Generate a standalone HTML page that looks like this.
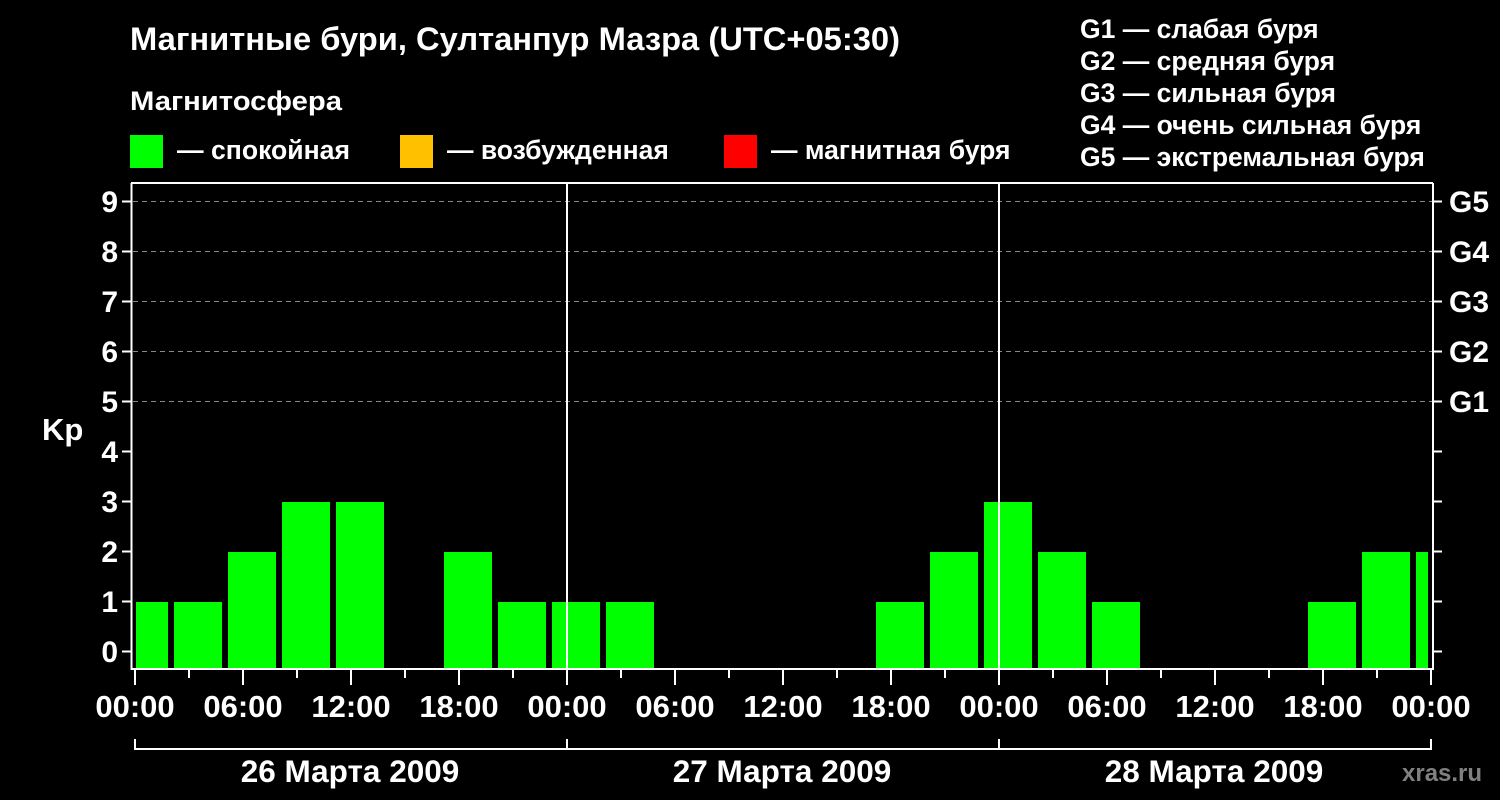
<!DOCTYPE html>
<html><head><meta charset="utf-8"><style>
html,body{margin:0;padding:0;background:#000;width:1500px;height:800px;overflow:hidden}
text{font-family:"Liberation Sans",Arial,sans-serif;font-weight:bold;fill:#fff}
</style></head><body>
<svg width="1500" height="800" viewBox="0 0 1500 800" xmlns="http://www.w3.org/2000/svg">
<rect width="1500" height="800" fill="#000"/>
<text x="130" y="50" font-size="32" textLength="770" lengthAdjust="spacingAndGlyphs">Магнитные бури, Султанпур Мазра (UTC+05:30)</text>
<text x="130" y="110" font-size="27" textLength="212" lengthAdjust="spacingAndGlyphs">Магнитосфера</text>
<rect x="130" y="135" width="33" height="33" fill="#00ff00"/>
<text x="177" y="159" font-size="26.5" textLength="173" lengthAdjust="spacingAndGlyphs">— спокойная</text>
<rect x="400" y="135" width="33" height="33" fill="#ffc000"/>
<text x="447" y="159" font-size="26.5">— возбужденная</text>
<rect x="724" y="135" width="33" height="33" fill="#ff0000"/>
<text x="771" y="159" font-size="26.5">— магнитная буря</text>
<g font-size="26.5">
<text x="1080" y="38">G1 — слабая буря</text>
<text x="1080" y="70">G2 — средняя буря</text>
<text x="1080" y="102">G3 — сильная буря</text>
<text x="1080" y="134">G4 — очень сильная буря</text>
<text x="1080" y="166">G5 — экстремальная буря</text>
</g>
<g stroke="#888" stroke-width="1" stroke-dasharray="5,4">
<line x1="133" y1="201.5" x2="1432" y2="201.5"/>
<line x1="133" y1="251.5" x2="1432" y2="251.5"/>
<line x1="133" y1="301.5" x2="1432" y2="301.5"/>
<line x1="133" y1="351.5" x2="1432" y2="351.5"/>
<line x1="133" y1="401.5" x2="1432" y2="401.5"/>
</g>
<g fill="#00ff00">
<rect x="136" y="602" width="32" height="66"/>
<rect x="174" y="602" width="48" height="66"/>
<rect x="228" y="552" width="48" height="116"/>
<rect x="282" y="502" width="48" height="166"/>
<rect x="336" y="502" width="48" height="166"/>
<rect x="444" y="552" width="48" height="116"/>
<rect x="498" y="602" width="48" height="66"/>
<rect x="552" y="602" width="48" height="66"/>
<rect x="606" y="602" width="48" height="66"/>
<rect x="876" y="602" width="48" height="66"/>
<rect x="930" y="552" width="48" height="116"/>
<rect x="984" y="502" width="48" height="166"/>
<rect x="1038" y="552" width="48" height="116"/>
<rect x="1092" y="602" width="48" height="66"/>
<rect x="1308" y="602" width="48" height="66"/>
<rect x="1362" y="552" width="48" height="116"/>
<rect x="1416" y="552" width="12" height="116"/>
</g>
<g stroke="#fff" stroke-width="2" fill="none">
<path d="M131.5 183 V669 H1433 V183"/>
<line x1="131" y1="183" x2="1433" y2="183"/>
<line x1="567" y1="183" x2="567" y2="668"/>
<line x1="999" y1="183" x2="999" y2="668"/>
<path d="M122 201.5h9M122 251.5h9M122 301.5h9M122 351.5h9M122 401.5h9M122 451.5h9M122 501.5h9M122 551.5h9M122 601.5h9M122 651.5h9"/>
<path d="M1433 201.5h9M1433 251.5h9M1433 301.5h9M1433 351.5h9M1433 401.5h9M1433 451.5h9M1433 501.5h9M1433 551.5h9M1433 601.5h9M1433 651.5h9"/>
<path d="M135 669v16M189 669v9M243 669v16M297 669v9M351 669v16M405 669v9M459 669v16M513 669v9M567 669v16M621 669v9M675 669v16M729 669v9M783 669v16M837 669v9M891 669v16M945 669v9M999 669v16M1053 669v9M1107 669v16M1161 669v9M1215 669v16M1269 669v9M1323 669v16M1377 669v9M1431 669v16"/>
<path d="M135 739V749H1431V739M567 739V749M999 739V749"/>
</g>
<g font-size="30" text-anchor="end">
<text x="118" y="212">9</text><text x="118" y="262">8</text><text x="118" y="312">7</text><text x="118" y="362">6</text><text x="118" y="412">5</text><text x="118" y="462">4</text><text x="118" y="512">3</text><text x="118" y="562">2</text><text x="118" y="612">1</text><text x="118" y="662">0</text>
</g>
<text x="42" y="440" font-size="31">Kp</text>
<g font-size="30">
<text x="1449" y="212">G5</text><text x="1449" y="262">G4</text><text x="1449" y="312">G3</text><text x="1449" y="362">G2</text><text x="1449" y="412">G1</text>
</g>
<g font-size="31" text-anchor="middle">
<text x="135" y="717">00:00</text><text x="243" y="717">06:00</text><text x="351" y="717">12:00</text><text x="459" y="717">18:00</text>
<text x="567" y="717">00:00</text><text x="675" y="717">06:00</text><text x="783" y="717">12:00</text><text x="891" y="717">18:00</text>
<text x="999" y="717">00:00</text><text x="1107" y="717">06:00</text><text x="1215" y="717">12:00</text><text x="1323" y="717">18:00</text>
<text x="1431" y="717">00:00</text>
</g>
<g font-size="31.5" text-anchor="middle">
<text x="350" y="782">26 Марта 2009</text><text x="782" y="782">27 Марта 2009</text><text x="1214" y="782">28 Марта 2009</text>
</g>
<text x="1402" y="781" font-size="24" style="fill:#808080">xras.ru</text>
</svg>
</body></html>
